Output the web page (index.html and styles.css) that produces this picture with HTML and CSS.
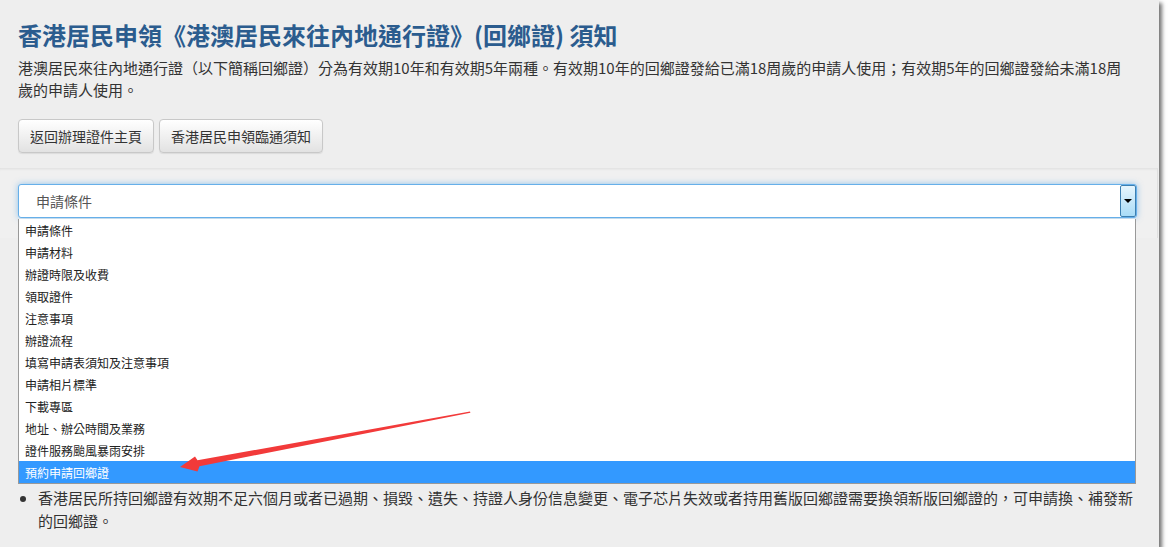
FILE: index.html
```html
<!DOCTYPE html>
<html lang="zh-Hant">
<head>
    <meta charset="UTF-8">
    <title>香港居民申領《港澳居民來往內地通行證》(回鄉證) 須知</title>
    <link rel="stylesheet" href="styles.css">
</head>
<body>

<div class="frame">

    <div class="head-panel">
        <h1>香港居民申領《港澳居民來往內地通行證》(回鄉證) 須知</h1>
        <p class="intro">港澳居民來往內地通行證（以下簡稱回鄉證）分為有效期10年和有效期5年兩種。有效期10年的回鄉證發給已滿18周歲的申請人使用；有效期5年的回鄉證發給未滿18周歲的申請人使用。</p>
        <div class="btn-row">
            <button class="btn">返回辦理證件主頁</button>
            <button class="btn">香港居民申領臨通須知</button>
        </div>
    </div>

    <div class="nav-strip">
        <div class="select-wrap">
            <div class="fake-select">
                <span class="select-value">申請條件</span>
                <span class="select-arrow"></span>
            </div>
            <ul class="option-list">
                <li>申請條件</li>
                <li>申請材料</li>
                <li>辦證時限及收費</li>
                <li>領取證件</li>
                <li>注意事項</li>
                <li>辦證流程</li>
                <li>填寫申請表須知及注意事項</li>
                <li>申請相片標準</li>
                <li>下載專區</li>
                <li>地址、辦公時間及業務</li>
                <li>證件服務颱風暴雨安排</li>
                <li class="active">預約申請回鄉證</li>
            </ul>
        </div>
    </div>

    <div class="content">
        <ul class="notes">
            <li>香港居民所持回鄉證有效期不足六個月或者已過期、損毀、遺失、持證人身份信息變更、電子芯片失效或者持用舊版回鄉證需要換領新版回鄉證的，可申請換、補發新的回鄉證。</li>
        </ul>
    </div>

    <!-- annotation arrow drawn over the page -->
    <svg class="mark-arrow" width="1159" height="547" viewBox="0 0 1159 547">
        <polygon points="180,467 195,456.5 197.5,460.3 470,411.6 470.4,412.8 199.5,466.2 197.5,471.5" fill="#f23a3a"/>
    </svg>

</div>

</body>
</html>
```

FILE: styles.css
```css
html, body {
    margin: 0;
    padding: 0;
    background: #fff;
}
body {
    font-family: "Noto Sans CJK TC", "Liberation Sans", sans-serif;
    color: #333;
}
.frame {
    position: relative;
    width: 1159px;
    height: 547px;
    background: #eeeeee;
    box-shadow: 3px 3px 4px rgba(0, 0, 0, 0.55);
    overflow: hidden;
}

/* header */
.head-panel {
    padding: 18px 23px 15px 18px;
    background: #eeeeee;
}
.head-panel h1 {
    margin: 0;
    font-size: 24px;
    line-height: 34px;
    font-weight: bold;
    color: #2b5c8e;
}
.intro {
    margin: 5px 0 0;
    font-size: 15px;
    line-height: 22px;
    color: #333;
}
.btn-row {
    margin-top: 18px;
    display: flex;
    gap: 5px;
}
.btn {
    font-family: inherit;
    font-size: 14px;
    color: #333;
    height: 34px;
    padding: 0 11px;
    border: 1px solid #c8c8c8;
    border-radius: 4px;
    background: linear-gradient(#ffffff, #e2e2e2);
    box-shadow: 0 1px 1px rgba(0, 0, 0, 0.08);
}

/* select strip */
.nav-strip {
    height: 70px;
    box-sizing: border-box;
    padding: 16px 0 0 18px;
    margin-right: 1px;
    background: #f0f0f0;
    border-right: 1px solid #e0e0e0;
    box-shadow: inset 0 3px 3px -2px rgba(0, 0, 0, 0.08);
}
.select-wrap {
    position: relative;
    width: 1119px;
}
.fake-select {
    height: 34px;
    box-sizing: border-box;
    display: flex;
    align-items: center;
    background: #fff;
    border: 1px solid #66afe9;
    border-radius: 3px;
    box-shadow: 0 0 6px rgba(102, 175, 233, 0.7);
}
.select-value {
    flex: 1;
    padding-left: 17px;
    font-size: 14px;
    color: #555;
}
.select-arrow {
    position: relative;
    width: 16px;
    height: 32px;
    box-sizing: border-box;
    border: 1px solid #3c7fb1;
    border-radius: 2px;
    background: linear-gradient(#e6f5fd, #a9dcf7);
}
.select-arrow::after {
    content: "";
    position: absolute;
    left: 3px;
    top: 13px;
    border-left: 4px solid transparent;
    border-right: 4px solid transparent;
    border-top: 4px solid #000;
}

/* open dropdown */
.option-list {
    position: absolute;
    top: 35px;
    left: 0;
    width: 1118px;
    box-sizing: border-box;
    margin: 0;
    padding: 0;
    list-style: none;
    background: #fff;
    border: 1px solid #999;
    border-top: none;
    z-index: 2;
}
.option-list li {
    height: 22px;
    line-height: 23px;
    padding-left: 6px;
    font-size: 12px;
    color: #222;
}
.option-list li.active {
    background: #3399ff;
    color: #fff;
}

/* body text */
.content {
    padding: 248px 23px 0 0;
}
.notes {
    margin: 0;
    padding-left: 38px;
    font-size: 15px;
    line-height: 23px;
    color: #333;
}

.mark-arrow {
    position: absolute;
    left: 0;
    top: 0;
    z-index: 3;
    pointer-events: none;
}
```
